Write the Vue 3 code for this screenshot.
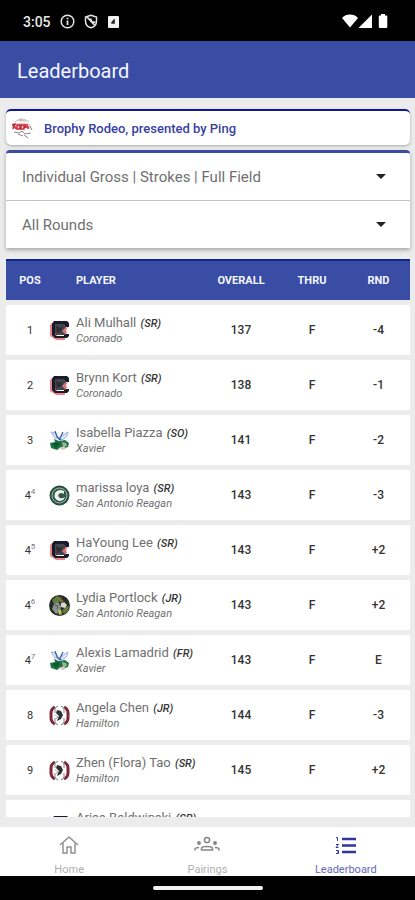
<script setup>
import { ref } from "vue";

const division = ref("Individual Gross | Strokes | Full Field");
const round = ref("All Rounds");

const players = [
  { pos: "1", name: "Ali Mulhall", year: "SR", school: "Coronado", logo: "coronado", overall: 137, rnd: "-4" },
  { pos: "2", name: "Brynn Kort", year: "SR", school: "Coronado", logo: "coronado", overall: 138, rnd: "-1" },
  { pos: "3", name: "Isabella Piazza", year: "SO", school: "Xavier", logo: "xavier", overall: 141, rnd: "-2" },
  { pos: "4", tie: "4", name: "marissa loya", year: "SR", school: "San Antonio Reagan", logo: "reagan", overall: 143, rnd: "-3" },
  { pos: "4", tie: "5", name: "HaYoung Lee", year: "SR", school: "Coronado", logo: "coronado", overall: 143, rnd: "+2" },
  { pos: "4", tie: "6", name: "Lydia Portlock", year: "JR", school: "San Antonio Reagan", logo: "photo", overall: 143, rnd: "+2" },
  { pos: "4", tie: "7", name: "Alexis Lamadrid", year: "FR", school: "Xavier", logo: "xavier", overall: 143, rnd: "E" },
  { pos: "8", name: "Angela Chen", year: "JR", school: "Hamilton", logo: "hamilton", overall: 144, rnd: "-3" },
  { pos: "9", name: "Zhen (Flora) Tao", year: "SR", school: "Hamilton", logo: "hamilton", overall: 145, rnd: "+2" },
  { pos: "10", name: "Arisa Baldwinski", year: "SR", school: "Coronado", logo: "coronado", overall: 146, rnd: "+1" },
];
</script>

<template>
  <div class="app">
    <div class="status">
      <span class="clock">3:05</span>
      <svg width="15" height="15" viewBox="0 0 15 15" fill="none" stroke="#e4e4e4">
        <circle cx="7.5" cy="7.5" r="6.3" stroke-width="1.5" />
        <path d="M7.5 6.5v4.5M7.5 3.8v1.5" stroke-width="1.8" />
      </svg>
      <svg width="14" height="15" viewBox="0 0 14 15" fill="none" stroke="#e4e4e4" stroke-width="1.5">
        <path d="M7 1.2 1.5 3v4.2c0 3 2.3 5.6 5.5 6.5 3.2-.9 5.5-3.5 5.5-6.5V3z" />
        <path d="M3 3l7.5 8M6.500 4.500l1 3 4 1" stroke-width="1.8" />
      </svg>
      <svg class="square" width="11" height="12" viewBox="0 0 11 12">
        <rect width="11" height="12" rx="1" fill="#f2f2f2" />
        <path d="M6.8 3v4.8H3.5L3 6.8 6 3z" fill="#222" />
      </svg>
      <svg class="signals" width="46" height="15" viewBox="0 0 46 15" fill="#fff">
        <path d="M0 4C4-.6 12-.6 16 4L8 13.5z" />
        <path d="M30 .5V14H16.5z" />
        <path d="M39 0h4v1.500h1.500a.8.8 0 0 1 .8.8V13a1 1 0 0 1-1 1h-6.500a1 1 0 0 1-1-1V2.300a.8.8 0 0 1 .8-.8H39z" />
      </svg>
    </div>

    <header class="header">
      <h1>Leaderboard</h1>
    </header>

    <main class="content">
      <a class="event" href="#">
        <svg width="24" height="24" viewBox="0 0 24 24" fill="none">
          <path d="M5 6Q12 0 19 6M8 4l8 1M11 2v4" stroke="#bbb" />
          <path d="M3 8Q12 5 20 8v5Q12 11 2 13z" fill="#f6c8ca" />
          <path d="M2 9l4-1M3 13l1-4 2 4M7 9v4h3V9zM11 9v4h3V9zM15 12V9h3M15 11h3v2" stroke="#c52835" stroke-width="1.4" />
          <path d="M4 16l5 1 3-2 3 3 6-1M8 18l5 2M14 19l4 3M20 10l2 4" stroke="#888" />
        </svg>
        <span>Brophy Rodeo, presented by Ping</span>
      </a>

      <div class="filters">
        <div class="filter">
          <select v-model="division" aria-label="Division">
            <option>Individual Gross | Strokes | Full Field</option>
          </select>
          <svg width="10" height="5" viewBox="0 0 10 5"><path d="M0 0h10L5 5z" fill="#222" /></svg>
        </div>
        <div class="filter">
          <select v-model="round" aria-label="Round">
            <option>All Rounds</option>
          </select>
          <svg width="10" height="5" viewBox="0 0 10 5"><path d="M0 0h10L5 5z" fill="#222" /></svg>
        </div>
      </div>

      <div class="board">
        <table>
          <thead>
            <tr>
              <th class="pos">POS</th>
              <th class="player">PLAYER</th>
              <th class="overall">OVERALL</th>
              <th class="thru">THRU</th>
              <th class="rnd">RND</th>
            </tr>
          </thead>
          <tbody>
            <tr v-for="p in players" :key="p.name">
              <td class="pos">{{ p.pos }}<sup v-if="p.tie">{{ p.tie }}</sup></td>
              <td>
                <div class="who">
                  <svg v-if="p.logo === 'coronado'" width="21" height="21" viewBox="0 0 21 21">
                    <path d="M4 2h4v15h8v3H7l-6-4V5z" fill="#e8868c" />
                    <path d="M5 1h13l2 2v4h-4V5H7L6 6v8l1 2h8v-2h5v2l-2 2H6l-3-3V4z" fill="#171b2b" />
                    <path d="M6 4h9l2 3-2 4 2 4H7l-1-2z" fill="#44464c" />
                    <path d="M7 6l4 2 3-2-2 5-4 2z" fill="#2a2c31" />
                    <path d="M16 8l3-1-2 3 1 3-2 1-3-3z" fill="#e0727a" />
                  </svg>
                  <svg v-else-if="p.logo === 'xavier'" width="21" height="21" viewBox="0 0 21 21">
                    <path d="M2 2l5 1 3 6-4-1zM19 2l-5 3-4 5 5-1 3-3z" fill="#dbe5f8" stroke="#8ba3d8" stroke-width=".8" />
                    <path d="M6 1l2 6 4 3M14 2l-4 8" fill="none" stroke="#3459a7" stroke-width="1.2" />
                    <path d="M5 9l5 2 6-1 4 3-1 4-3 1-4-1-4 3-6-2-1-5 5-1z" fill="#207345" />
                    <path d="M3 14l6-2 2 2-4 4z" fill="#085b2c" />
                    <path d="M13 12l4 1 1 3-4 1z" fill="#9bb995" />
                    <path d="M11 18l4-2 2 3-4 1z" fill="#d6c7c2" />
                  </svg>
                  <svg v-else-if="p.logo === 'reagan'" width="21" height="21" viewBox="0 0 21 21" fill="none">
                    <circle cx="10.5" cy="10.5" r="10" fill="#254f40" />
                    <circle cx="10.5" cy="10.5" r="7.5" fill="#31584a" stroke="#a8bdb1" />
                    <path d="M15 6Q9 3 6 8q-2 6 4 8 5 0 6-4-3 2-5 1-3-2-1-4 2-2 5 0z" fill="#edf2ec" />
                  </svg>
                  <svg v-else-if="p.logo === 'photo'" width="21" height="21" viewBox="0 0 21 21">
                    <circle cx="10.5" cy="10.5" r="10.5" fill="#252d25" />
                    <path d="M3 5l5-4 5 2-3 4-5 2zM16 12l4-1-1 5-4 3-2-3z" fill="#657b3d" />
                    <path d="M5 9l4-2 3 4-1 5-4 3-4-5z" fill="#89938f" />
                    <path d="M12 8l3-1 3 3-2 3-4-1z" fill="#d6dad2" />
                    <path d="M9 16l3-2 1 5-3 1z" fill="#b9bf58" />
                    <path d="M11 4l3 1 1 3-4-1z" fill="#89683e" />
                    <path d="M6 10l3 1-1 3" fill="none" stroke="#505b62" />
                  </svg>
                  <svg v-else width="21" height="21" viewBox="0 0 21 21" fill="none">
                    <path d="M6 2Q2 4 2 8v5q0 4 4 6M15 2q4 2 4 6v5q0 4-4 6" stroke="#7f2638" stroke-width="3" />
                    <path d="M9 1L6 3v5M12 1l3 2v5M9 20l-3-2v-5M12 20l3-2v-5" stroke="#999" stroke-width="1.2" />
                    <path d="M8 5l4 1 2 4-2 4-4 2 1-3 1-2-3-3z" fill="#303033" />
                    <path d="M6 10l3 2-2 2" stroke="#aaa" />
                  </svg>
                  <div>
                    <p class="name">{{ p.name }} <em>({{ p.year }})</em></p>
                    <p class="school">{{ p.school }}</p>
                  </div>
                </div>
              </td>
              <td>{{ p.overall }}</td>
              <td>F</td>
              <td>{{ p.rnd }}</td>
            </tr>
          </tbody>
        </table>
      </div>
    </main>

    <nav class="tabs">
      <a href="#">
        <svg width="20" height="20" viewBox="0 0 20 20" fill="none" stroke="#929292" stroke-width="1.5">
          <path d="M1 10l9-8 9 8M4 8v10h4v-6h4v6h4V8" />
        </svg>
        <span>Home</span>
      </a>
      <a href="#">
        <svg width="26" height="20" viewBox="0 0 26 20" fill="none" stroke="#858585" stroke-width="1.5">
          <circle cx="13" cy="5" r="2.6" />
          <path d="M7.5 15v-1.5q0-2 5.500-2t5.500 2V15z" />
          <circle cx="5" cy="8" r="1.2" fill="#858585" />
          <circle cx="21" cy="8" r="1.2" fill="#858585" />
          <path d="M1 15.500v-1q0-2 4-2M25 15.500v-1q0-2-4-2" />
        </svg>
        <span>Pairings</span>
      </a>
      <a href="#" class="active">
        <svg width="22" height="20" viewBox="0 0 22 20" fill="none" stroke="#3035a0">
          <path d="M7 4h14M7 10.500h14M7 17h14" stroke-width="2.4" />
          <path d="M1 2.500h1.500V6M1 9.500h2.500L1 12.500h2.500M1 15.500h2.500v3H1M2 17h1.500" />
        </svg>
        <span>Leaderboard</span>
      </a>
    </nav>
    <div class="gesture"><span></span></div>
  </div>
</template>

<style>
body {
  background: #000;
}
</style>

<style scoped>
.app {
  display: flex;
  flex-direction: column;
  height: 100vh;
  font-family: Roboto, "Liberation Sans", sans-serif;
  background: #ececec;
}
.app * {
  box-sizing: border-box;
}
.status {
  display: flex;
  align-items: center;
  gap: 9px;
  height: 41px;
  padding: 2px 27px 0 23px;
  background: #000;
  color: #e8e8e8;
  flex-shrink: 0;
}
.clock {
  font-size: 14px;
  font-weight: 500;
}
.square {
  margin-left: 1px;
}
.signals {
  margin-left: auto;
}
.header {
  display: flex;
  align-items: center;
  height: 57px;
  padding: 3px 17px 0;
  background: #384da3;
  color: #f5f6ff;
  flex-shrink: 0;
}
h1 {
  margin: 0;
  font-size: 20px;
  font-weight: 400;
}
.content {
  display: flex;
  flex-direction: column;
  flex: 1;
  min-height: 0;
  padding: 11px 5px 10px 6px;
}
.event {
  display: flex;
  align-items: center;
  gap: 10px;
  height: 36px;
  padding: 0 4px;
  border-top: 2px solid #10189a;
  border-radius: 5px;
  background: #fff;
  box-shadow: 0 1px 3px rgba(0, 0, 0, 0.3);
  color: #383fa3;
  font-size: 13px;
  font-weight: 500;
  text-decoration: none;
  flex-shrink: 0;
}
.filters {
  margin-top: 5px;
  border-top: 3px solid #384da3;
  border-radius: 4px 4px 0 0;
  background: #fff;
  box-shadow: 0 2px 4px rgba(0, 0, 0, 0.3);
  flex-shrink: 0;
}
.filter {
  display: flex;
  align-items: center;
  height: 47px;
  padding-right: 24px;
}
.filter:first-child {
  height: 48px;
  border-bottom: 1px solid #c4c4c4;
}
select {
  flex: 1;
  height: 100%;
  padding: 0 16px;
  border: 0;
  appearance: none;
  background: transparent;
  color: #707070;
  font-family: inherit;
  font-size: 15px;
}
.board {
  flex: 1;
  min-height: 0;
  margin-top: 6px;
  overflow: hidden;
}
table {
  width: 100%;
  table-layout: fixed;
  border-spacing: 0 5px;
}
th {
  height: 41px;
  padding: 0;
  border-top: 2px solid #12258f;
  background: #384da3;
  color: #f5f6ff;
  font-size: 11px;
  font-weight: 700;
}
.pos {
  width: 43px;
  padding-left: 5px;
}
.player {
  padding-left: 27px;
  text-align: left;
}
.overall {
  width: 72px;
}
.thru {
  width: 70px;
}
.rnd {
  width: 63px;
}
td {
  height: 50px;
  padding: 0;
  background: #fff;
  color: #333;
  font-size: 12px;
  font-weight: 500;
  text-align: center;
}
td.pos {
  padding-left: 5px;
  font-size: 11px;
  font-weight: 400;
}
sup {
  font-size: 8px;
  line-height: 8px;
  color: #777;
}
.who {
  display: flex;
  align-items: center;
  gap: 6px;
  text-align: left;
  white-space: nowrap;
  font-weight: 400;
}
p {
  margin: 0;
}
.name {
  font-size: 13px;
  line-height: 17px;
  color: #707070;
}
.name em {
  margin-left: 1px;
  font-size: 11px;
  font-weight: 500;
  color: #333;
}
.school {
  font-size: 11px;
  line-height: 14px;
  font-style: italic;
  color: #707070;
}
.tabs {
  display: flex;
  height: 49px;
  background: #fff;
  flex-shrink: 0;
}
.tabs a {
  display: flex;
  flex: 1;
  flex-direction: column;
  align-items: center;
  gap: 9px;
  padding-top: 8px;
  color: #b0b0b0;
  font-size: 11px;
  line-height: 12px;
  text-decoration: none;
}
.tabs .active {
  color: #6467b8;
}
.gesture {
  display: flex;
  justify-content: center;
  align-items: center;
  height: 24px;
  background: #000;
  flex-shrink: 0;
}
.gesture span {
  width: 110px;
  height: 4px;
  border-radius: 2px;
  background: #f2f2f2;
}
</style>
